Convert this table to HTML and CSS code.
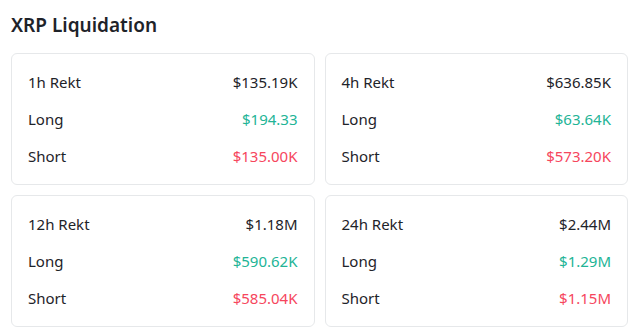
FILE: index.html
```html
<!DOCTYPE html>
<html>
<head>
<meta charset="utf-8">
<link rel="stylesheet" href="styles.css">
</head>
<body>
<section class="liq">
  <h2 class="liq-title">XRP Liquidation</h2>
  <div class="liq-grid">
    <div class="card">
      <div class="row"><span class="label">1h Rekt</span><span class="val">$135.19K</span></div>
      <div class="row"><span class="label">Long</span><span class="val up">$194.33</span></div>
      <div class="row"><span class="label">Short</span><span class="val down">$135.00K</span></div>
    </div>
    <div class="card">
      <div class="row"><span class="label">4h Rekt</span><span class="val">$636.85K</span></div>
      <div class="row"><span class="label">Long</span><span class="val up">$63.64K</span></div>
      <div class="row"><span class="label">Short</span><span class="val down">$573.20K</span></div>
    </div>
    <div class="card">
      <div class="row"><span class="label">12h Rekt</span><span class="val">$1.18M</span></div>
      <div class="row"><span class="label">Long</span><span class="val up">$590.62K</span></div>
      <div class="row"><span class="label">Short</span><span class="val down">$585.04K</span></div>
    </div>
    <div class="card">
      <div class="row"><span class="label">24h Rekt</span><span class="val">$2.44M</span></div>
      <div class="row"><span class="label">Long</span><span class="val up">$1.29M</span></div>
      <div class="row"><span class="label">Short</span><span class="val down">$1.15M</span></div>
    </div>
  </div>
</section>
</body>
</html>
```
FILE: styles.css
```css
html, body {
  margin: 0;
  padding: 0;
  background: #ffffff;
}
body {
  font-family: "Noto Sans", "Liberation Sans", sans-serif;
  color: #1e2329;
}
.liq {
  padding: 11px 1px 0 11px;
}
.liq-title {
  margin: 0;
  font-size: 19px;
  line-height: 28px;
  font-weight: 600;
  color: #1e2329;
}
.liq-grid {
  margin-top: 14px;
  display: grid;
  grid-template-columns: 1fr 1fr;
  gap: 10px;
}
.card {
  border: 1px solid #e6e8ea;
  border-radius: 6px;
  padding: 16px 16px;
  display: flex;
  flex-direction: column;
  gap: 13px;
}
.row {
  display: flex;
  justify-content: space-between;
  align-items: center;
  height: 24px;
  font-size: 15px;
  line-height: 24px;
}
.label { color: #1e2329; }
.val { color: #1e2329; }
.up { color: #22b496; }
.down { color: #f6465d; }
```
